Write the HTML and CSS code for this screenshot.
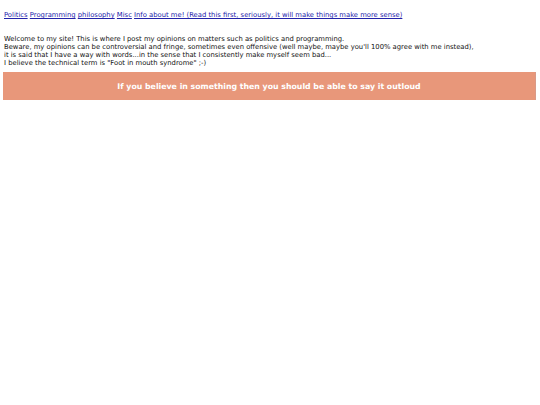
FILE: index.html
```html
<!DOCTYPE html>
<html>
<head>
<meta charset="utf-8">
<link rel="stylesheet" href="styles.css">
</head>
<body>
<nav class="nav">
<a href="#">Politics</a> <a href="#">Programming</a> <a href="#">philosophy</a> <a href="#">Misc</a> <a href="#">Info about me! (Read this first, seriously, it will make things make more sense)</a>
</nav>
<p class="intro">Welcome to my site! This is where I post my opinions on matters such as politics and programming.<br>
Beware, my opinions can be controversial and fringe, sometimes even offensive (well maybe, maybe you'll 100% agree with me instead),<br>
it is said that I have a way with words...in the sense that I consistently make myself seem bad...<br>
I believe the technical term is "Foot in mouth syndrome" ;-)</p>
<div class="banner">If you believe in something then you should be able to say it outloud</div>
</body>
</html>
```
FILE: styles.css
```css
html, body {
  margin: 0;
  padding: 0;
  background: #fff;
}
body {
  font-family: "DejaVu Sans", Verdana, sans-serif;
  font-size: 6.8px;
  color: #111;
  padding: 11px 3px 0 3px;
}
.nav {
  padding-left: 1px;
  line-height: 8px;
}
.nav a {
  color: #2222aa;
}
.intro {
  margin: 16px 0 5px 1px;
  line-height: 8px;
}
.banner {
  background: #e8977a;
  border-right: 1px solid #d99a88;
  color: #fff;
  font-weight: bold;
  font-size: 7.8px;
  text-align: center;
  height: 28px;
  line-height: 30px;
  width: 532px;
}
```
